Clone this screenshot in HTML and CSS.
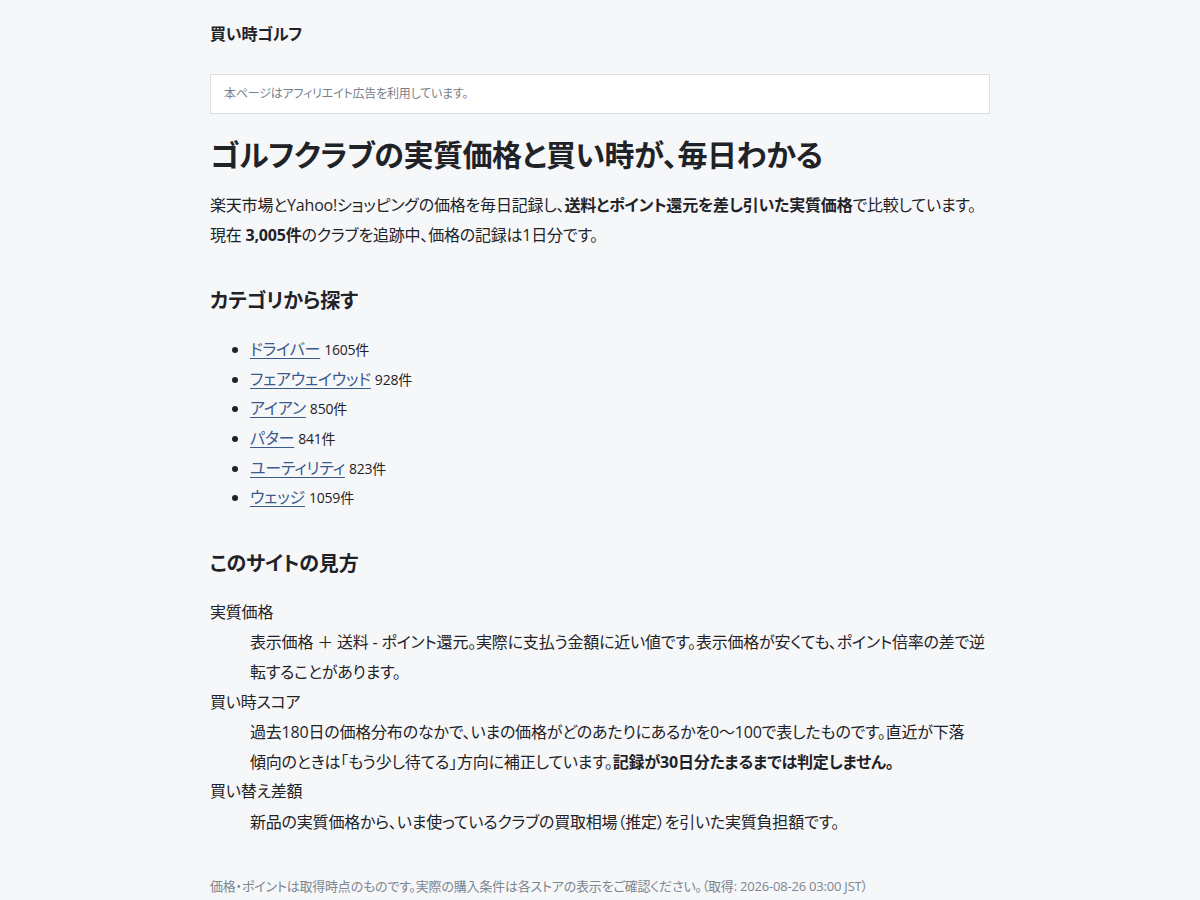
FILE: index.html
```html
<!DOCTYPE html>
<html lang="ja">
<head>
<meta charset="utf-8">
<title>買い時ゴルフ</title>
<link rel="stylesheet" href="styles.css">
</head>
<body>
<div class="page">
  <header class="site-header"><a class="site-title" href="#">買い時ゴルフ</a></header>
  <div class="notice">本ページはアフィリエイト広告を利用しています。</div>
  <main>
    <h1 class="hero-title">ゴルフクラブの実質価格と買い時が、毎日わかる</h1>
    <p class="lead">楽天市場とYahoo!ショッピングの価格を毎日記録し、<strong>送料とポイント還元を差し引いた実質価格</strong>で比較しています。<br>現在 <strong>3,005件</strong>のクラブを追跡中、価格の記録は1日分です。</p>

    <h2 class="section-title">カテゴリから探す</h2>
    <ul class="cat-list">
      <li><a href="#">ドライバー</a> <span class="count">1605件</span></li>
      <li><a href="#">フェアウェイウッド</a> <span class="count">928件</span></li>
      <li><a href="#">アイアン</a> <span class="count">850件</span></li>
      <li><a href="#">パター</a> <span class="count">841件</span></li>
      <li><a href="#">ユーティリティ</a> <span class="count">823件</span></li>
      <li><a href="#">ウェッジ</a> <span class="count">1059件</span></li>
    </ul>

    <h2 class="section-title section-title--guide">このサイトの見方</h2>
    <dl class="guide">
      <dt>実質価格</dt>
      <dd>表示価格 ＋ 送料 - ポイント還元。実際に支払う金額に近い値です。表示価格が安くても、ポイント倍率の差で逆転することがあります。</dd>
      <dt>買い時スコア</dt>
      <dd>過去180日の価格分布のなかで、いまの価格がどのあたりにあるかを0〜100で表したものです。直近が下落<span class="nowrap">傾向</span>のときは「もう少し待てる」方向に補正しています。<strong>記録が30日分たまるまでは判定しません。</strong></dd>
      <dt>買い替え差額</dt>
      <dd>新品の実質価格から、いま使っているクラブの買取相場（推定）を引いた実質負担額です。</dd>
    </dl>
  </main>
  <footer class="site-footer">価格・ポイントは取得時点のものです。実際の購入条件は各ストアの表示をご確認ください。（取得: 2026-08-26 03:00 JST）</footer>
</div>
</body>
</html>
```

FILE: styles.css
```css
html, body {
  margin: 0;
  padding: 0;
}
body {
  background: #f6f7f9;
  color: #1f2328;
  font-family: "Open Sans", "Noto Sans CJK JP", sans-serif;
  font-size: 16px;
  line-height: 1.85;
  letter-spacing: -0.2px;
  font-feature-settings: "palt";
}
.page {
  width: 780px;
  margin: 0 auto;
  padding: 22px 0 0;
}
.site-header {
  line-height: 24px;
}
.site-title {
  font-size: 16px;
  font-weight: 700;
  color: #1f2328;
  text-decoration: none;
}
.notice {
  margin-top: 28px;
  background: #fff;
  border: 1px solid #dcdfe4;
  padding: 10px 13px;
  font-size: 12px;
  line-height: 18px;
  color: #7a8089;
}
.hero-title {
  margin: 20px 0 0;
  font-size: 30px;
  line-height: 42px;
  font-weight: 700;
  letter-spacing: -0.5px;
}
.lead {
  margin: 15px 0 0;
}
.lead strong {
  font-weight: 700;
}
.section-title {
  margin: 36px 0 0;
  font-size: 20px;
  line-height: 30px;
  font-weight: 700;
}
.cat-list {
  margin: 19px 0 0;
  padding-left: 40px;
}
.cat-list a {
  color: #3b5a8c;
  text-decoration: underline;
  text-underline-offset: 3px;
}
.count {
  font-size: 14px;
}
.section-title--guide {
  margin-top: 36px;
}
.guide {
  margin: 19px 0 0;
}
.guide dt {
  margin: 0;
}
.guide dd {
  margin: 0 0 0 40px;
  padding-top: 1px;
}
.nowrap {
  white-space: nowrap;
}
.site-footer {
  margin-top: 38px;
  font-size: 13px;
  line-height: 20px;
  color: #7d8590;
  padding-bottom: 20px;
}
```
